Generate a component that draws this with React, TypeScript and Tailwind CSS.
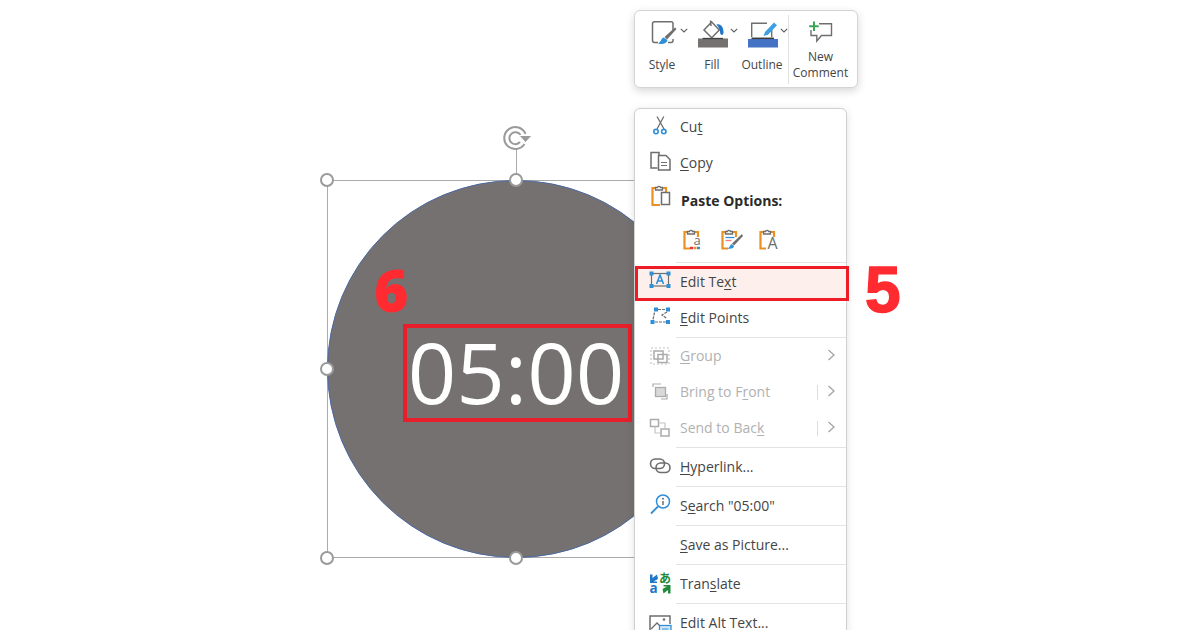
import type { ReactNode } from "react";

const G = "#6e6e6e";
const O = "#ea8f22";
const B = "#2f8fd8";

function Icon({ size = 24, children }: { size?: number; children: ReactNode }) {
  return (
    <svg width={size} height={size} viewBox={`0 0 ${size} ${size}`} fill="none" className="shrink-0 overflow-visible">
      {children}
    </svg>
  );
}

function Clip() {
  return <path d="M5 5H2.500V21.500H8M16 10V5H13" stroke={O} strokeWidth="2.200" />;
}

function ClipTop() {
  return <path d="M5.500 7V4.500h2a1.600 1.600 0 0 1 3 0h2V7Z" stroke={G} strokeWidth="1.300" fill="#fff" />;
}

const menuIcons: Record<string, ReactNode> = {
  cut: (
    <Icon>
      <path d="M9 1.500 16 14M15.800 1.500 9 14" stroke={G} strokeWidth="1.300" />
      <circle cx="8" cy="16.600" r="2.200" stroke={B} strokeWidth="1.600" />
      <circle cx="15.800" cy="16.600" r="2.200" stroke={B} strokeWidth="1.600" />
    </Icon>
  ),
  copy: (
    <Icon>
      <path d="M9.500 17H3V1.500h8V5" stroke={G} strokeWidth="1.500" />
      <path d="M10.500 4.500H18l4 4V19H10.500Z" stroke={G} strokeWidth="1.500" fill="#fff" />
      <path d="M13 11.500h6M13 14.500h6" stroke={G} strokeWidth="1.100" />
    </Icon>
  ),
  paste: (
    <Icon>
      <path d="M7 3H4.500V20H12M18 7V3H15" stroke={O} strokeWidth="2.200" />
      <path d="M7.500 5V2.500h2a1.600 1.600 0 0 1 3 0h2V5Z" stroke={G} strokeWidth="1.300" fill="#fff" />
      <rect x="13.500" y="7.500" width="8" height="12" stroke={G} strokeWidth="1.500" fill="#fff" />
    </Icon>
  ),
  editText: (
    <Icon>
      <rect x="3.500" y="3.500" width="17" height="12.500" stroke={G} strokeWidth="1.200" />
      <path d="M8.500 14 12 5l3.500 9M9.800 11h4.400" stroke={B} strokeWidth="1.600" />
      {[
        [1.500, 1.500],
        [18.500, 1.500],
        [1.500, 14],
        [18.500, 14],
      ].map(([x, y]) => (
        <rect key={x + "-" + y} x={x} y={y} width="4" height="4" fill={B} />
      ))}
    </Icon>
  ),
  editPoints: (
    <Icon>
      <path d="M10 3.500h8M19 6l-5 3 5 3.500M6.500 6.500l-1.500 7M7 16h11" stroke={G} strokeWidth="1.200" strokeDasharray="3 1" />
      {[
        [6, 1.500],
        [18, 1.500],
        [2.500, 14],
        [18, 14],
      ].map(([x, y]) => (
        <rect key={x + "-" + y} x={x} y={y} width="4" height="4" fill={B} />
      ))}
    </Icon>
  ),
  group: (
    <Icon>
      <rect x="3" y="4" width="18" height="16" stroke="#c4c4c4" strokeWidth="1.200" strokeDasharray="2 2" />
      <rect x="6" y="7" width="9" height="8" stroke="#ababab" strokeWidth="1.500" />
      <rect x="10" y="10.500" width="9" height="8" stroke="#ababab" strokeWidth="1.500" />
    </Icon>
  ),
  front: (
    <Icon>
      <path d="M5 7V4h8M19 14v5h-6" stroke="#ababab" strokeWidth="1.200" />
      <rect x="7.500" y="7.500" width="10" height="9" fill="#d9d9d9" stroke="#ababab" strokeWidth="1.300" />
    </Icon>
  ),
  back: (
    <Icon>
      <rect x="2.500" y="3.500" width="8" height="7" stroke="#ababab" strokeWidth="1.500" />
      <rect x="13" y="13" width="8" height="7" stroke="#ababab" strokeWidth="1.500" />
      <path d="M10.500 7h6.500v6M7 10.500V17h6" stroke="#c4c4c4" strokeWidth="1.200" />
    </Icon>
  ),
  link: (
    <Icon>
      <rect x="2.500" y="4" width="14" height="9.500" rx="4.700" stroke={G} strokeWidth="1.600" />
      <rect x="8" y="8" width="14" height="9.500" rx="4.700" stroke={G} strokeWidth="1.600" />
    </Icon>
  ),
  search: (
    <Icon>
      <circle cx="15" cy="7.500" r="6.500" stroke={B} strokeWidth="1.500" />
      <path d="M10 12.500 3 19.500" stroke={B} strokeWidth="1.800" />
      <path d="M15 7v4" stroke={G} strokeWidth="1.500" />
      <circle cx="15" cy="4.700" r="1" fill={G} />
    </Icon>
  ),
  translate: (
    <Icon>
      <path d="M2 2.500h2.500V6L9 2.500 10 7 5.500 9.500H9V11H2Z" fill="#1f77c9" />
      <text x="1.500" y="21" fontSize="13.500" fontWeight="700" fill="#1f77c9" fontFamily="Open Sans">a</text>
      <text x="11" y="11" fontSize="12" fontWeight="700" fill="#218a3a" fontFamily="Noto Sans CJK JP">あ</text>
      <path d="M22.500 21.500H20V18l-4.500 3.500-1-4.500L19 14.500h-3.500V13h7Z" fill="#218a3a" />
    </Icon>
  ),
  alt: (
    <Icon>
      <path d="M10 20H2V5h20v8" stroke={G} strokeWidth="1.500" />
      <path d="M3 18l6-6 3.500 3.500" stroke={G} strokeWidth="1.300" />
      <circle cx="16" cy="8.500" r="1.300" fill={G} />
      <rect x="11.500" y="14.500" width="11.500" height="7" fill="#d7e8f7" stroke={B} strokeWidth="1.300" />
      <path d="M14 18h6.500" stroke={B} strokeWidth="1" />
    </Icon>
  ),
};

function Sep({ className = "" }: { className?: string }) {
  return <div className={`ml-[41px] h-[1px] bg-[#e3e3e3] ${className}`} />;
}

type RowProps = {
  icon?: string;
  before: string;
  hot: string;
  after?: string;
  off?: boolean;
  more?: boolean;
  split?: boolean;
  tall?: boolean;
  children?: ReactNode;
};

function Row({ icon, before, hot, after, off, more, split, tall, children }: RowProps) {
  return (
    <div className={`relative flex items-center pl-[13px] ${tall ? "h-[38px]" : "h-[36px]"}`}>
      {children}
      <div className="relative flex h-[24px] w-[24px] shrink-0 items-center justify-center">
        {icon ? menuIcons[icon] : null}
      </div>
      <div className={`relative ml-[8px] text-[14px] leading-[14px] whitespace-pre ${off ? "text-[#b1b1b1]" : "text-[#454545]"}`}>
        {before}
        <span className="underline underline-offset-2">{hot}</span>
        {after}
      </div>
      {split ? <div className="absolute left-[182px] top-[11px] h-[15px] w-[1px] bg-[#dcdcdc]" /> : null}
      {more ? (
        <svg width="9" height="12" viewBox="0 0 9 12" fill="none" className="absolute left-[192px] top-[11px]">
          <path d="M1.500 1 7 6l-5.500 5" stroke="#a4a4a4" strokeWidth="1.300" />
        </svg>
      ) : null}
    </div>
  );
}

function Chevron() {
  return (
    <svg width="8" height="5" viewBox="0 0 8 5" fill="none" className="mt-[10px] ml-[2px] shrink-0">
      <path d="M.8.8 4 4 7.200.8" stroke="#5f5f5f" strokeWidth="1.100" />
    </svg>
  );
}

function ToolButton({ label, children }: { label: string; children: ReactNode }) {
  return (
    <div className="flex w-[50px] flex-col items-center">
      <div className="flex h-[33px] w-full items-start pl-[11px]">
        {children}
        <Chevron />
      </div>
      <div className="mt-[6px] text-[12px] leading-[16px] text-[#454545]">{label}</div>
    </div>
  );
}

function Handle({ className }: { className: string }) {
  return (
    <div className={`absolute h-[14px] w-[14px] rounded-full border-[2.5px] border-[#9a9a9a] bg-white ${className}`} />
  );
}

export default function App() {
  return (
    <div className="relative h-[630px] w-[1200px] overflow-hidden bg-white font-['Open_Sans',sans-serif]">
      {/* shape on the slide */}
      <div className="absolute left-[327px] top-[180px] h-[378px] w-[378px] border border-[#ababab]">
        <div className="absolute -inset-[1px] flex items-center justify-center rounded-full border border-[#4a68a3] bg-[#767171]">
          <div className="ml-[2px] mt-[7px] flex h-[98px] w-[229px] items-center justify-center border-[4px] border-[#e81f2a]">
            <span className="relative left-[-1px] top-[-1px] text-[85px] font-medium leading-none text-white">05:00</span>
          </div>
        </div>
        <div className="absolute left-[188px] top-[-31px] h-[31px] w-[1px] bg-[#ababab]" />
        <svg width="34" height="30" viewBox="0 0 34 30" fill="none" className="absolute left-[172px] top-[-57px]">
          <path d="M24.500 20A11 11 0 1 1 25.500 10" stroke="#9a9a9a" strokeWidth="2" />
          <path d="M20 18A6 6 0 1 1 20.500 11" stroke="#9a9a9a" strokeWidth="2" />
          <path d="M19 11.500h13l-6.500 7Z" fill="#9a9a9a" stroke="#fff" strokeWidth="1" />
        </svg>
        <Handle className="left-[-8px] top-[-8px]" />
        <Handle className="left-[181px] top-[-8px]" />
        <Handle className="left-[-8px] top-[181px]" />
        <Handle className="left-[-8px] top-[370px]" />
        <Handle className="left-[181px] top-[370px]" />
      </div>

      <div className="absolute left-[374px] top-[249px] text-[59px] font-extrabold leading-[80px] text-[#ff2b30]">6</div>
      <div className="absolute left-[865px] top-[255px] font-['Liberation_Sans',sans-serif] text-[64px] font-bold leading-[70px] text-[#ff2b30] [-webkit-text-stroke:1.5px_#ff2b30]">
        5
      </div>

      {/* mini toolbar */}
      <div className="absolute left-[634px] top-[10px] flex h-[78px] w-[224px] rounded-[6px] border border-[#d4d4d4] bg-white pl-[2px] pt-[7px] shadow-[0_3px_8px_rgba(0,0,0,0.16)]">
        <ToolButton label="Style">
          <svg width="30" height="30" viewBox="0 0 30 30" fill="none" className="shrink-0">
            <path d="M10 24.500H6.500a2 2 0 0 1-2-2V5.700a2 2 0 0 1 2-2h16.500a2 2 0 0 1 2 2V12" stroke={G} strokeWidth="1.500" />
            <path d="M25 21v1.500a2 2 0 0 1-2 2H20" stroke={G} strokeWidth="1.500" />
            <path d="M27 9.500 16.500 19l2.500 2.500L28.500 11Z" fill={G} />
            <path d="M15.500 19.500c-2.500 1-2 4-5.500 6 4.500 1.500 9 0 9.500-3.500Z" fill={B} />
          </svg>
        </ToolButton>
        <ToolButton label="Fill">
          <svg width="30" height="30" viewBox="0 0 30 30" fill="none" className="shrink-0">
            <path d="M12.500 2.500 13 8M13.700 4 6 12l7.700 7.700L21.300 12Z" stroke={G} strokeWidth="1.500" />
            <path d="M18.500 6.500c4-1.500 7.500 3 7 8.500-.3 2.500-3 2.500-3.300 0-.2-2.500-1-5.500-3.700-8.500Z" fill="#1f77c9" />
            <rect x="0" y="20.500" width="30" height="9" fill="#767171" />
            <path d="M4.700 20.500H25" stroke="#3f3f3f" strokeWidth="1.300" />
          </svg>
        </ToolButton>
        <ToolButton label="Outline">
          <svg width="30" height="30" viewBox="0 0 30 30" fill="none" className="shrink-0">
            <path d="M19 5.300H3.700V19M23.700 10.500V19" stroke={G} strokeWidth="1.400" />
            <path d="M26 4.500 17 14l-1.500 4 4.500-1.300 9-9.500Z" fill="#3a9fe3" />
            <rect x="0" y="21" width="30" height="8.500" fill="#4472c4" />
            <path d="M3.500 20.300H26" stroke="#3a3a3a" strokeWidth="1.500" />
          </svg>
        </ToolButton>
        <div className="ml-[1px] mt-[-3px] h-[69px] w-[1px] bg-[#e0e0e0]" />
        <div className="flex w-[63px] flex-col items-center text-[12px] leading-[16px] text-[#454545]">
          <svg width="26" height="26" viewBox="0 0 26 26" fill="none" className="mt-[3px] shrink-0">
            <path d="M11 2.800H23.500V14.500H13.500L8.800 20V14.500H3V9" stroke={G} strokeWidth="1.400" />
            <path d="M6 .5v9.500M1.200 5.200h9.500" stroke="#3aa655" strokeWidth="2" />
          </svg>
          <div className="mt-[2px]">New</div>
          <div>Comment</div>
        </div>
      </div>

      {/* context menu */}
      <div className="absolute left-[634px] top-[108px] w-[213px] rounded-t-[6px] border border-[#d0d0d0] bg-white shadow-[0_2px_8px_rgba(0,0,0,0.12)]">
        <Row icon="cut" before="Cu" hot="t" />
        <Row icon="copy" before="" hot="C" after="opy" />
        <div className="flex h-[40px] items-center pl-[13px]">
          <div className="relative top-[-4px] flex h-[24px] w-[24px] items-center justify-center">{menuIcons.paste}</div>
          <div className="ml-[9px] text-[14px] font-bold leading-[20px] text-[#2b2b2b]">Paste Options:</div>
        </div>
        <div className="flex h-[41px] items-center gap-[14px] pl-[47px] pb-[5px]">
          <Icon>
            <Clip />
            <ClipTop />
            <text x="11.500" y="18" fontSize="13" fill={G} fontFamily="Open Sans">a</text>
            <path d="M8 21h3" stroke="#e53935" strokeWidth="2.500" />
            <path d="M11.500 21h3" stroke="#e8912d" strokeWidth="2.500" />
            <path d="M15 21h3" stroke="#2f8fd8" strokeWidth="2.500" />
          </Icon>
          <Icon>
            <Clip />
            <ClipTop />
            <path d="M5.500 10.500h9" stroke={B} strokeWidth="1.300" />
            <path d="M5.500 13.500h6" stroke="#ef7d7d" strokeWidth="1.300" />
            <path d="M22 7 12 16.500l2 2L23 9Z" fill={G} />
            <path d="M11.500 17c-1.500 1-1.500 3.500-4 4.500 3 .8 6.500 0 6.500-2.500Z" fill={B} />
          </Icon>
          <Icon>
            <Clip />
            <ClipTop />
            <text x="9.500" y="22" fontSize="16" fill={G} fontFamily="Open Sans">A</text>
          </Icon>
        </div>
        <Sep className="mb-[1px]" />
        <Row icon="editText" before="Edit Te" hot="x" after="t">
          <div className="absolute left-0 top-[2px] h-[35px] w-[214px] border-[3px] border-[#ee1c25] bg-[#fdf0ec]" />
        </Row>
        <Row icon="editPoints" before="" hot="E" after="dit Points" />
        <Sep className="mt-[1px]" />
        <Row icon="group" before="" hot="G" after="roup" off more />
        <Row icon="front" before="Bring to F" hot="r" after="ont" off more split />
        <Row icon="back" before="Send to Bac" hot="k" off more split />
        <Sep className="mt-[1px]" />
        <Row icon="link" before="" hot="H" after="yperlink..." tall />
        <Sep />
        <Row icon="search" before="S" hot="e" after='arch "05:00"' tall />
        <Sep />
        <Row before="" hot="S" after="ave as Picture..." tall />
        <Sep />
        <Row icon="translate" before="Tran" hot="s" after="late" tall />
        <Sep />
        <Row icon="alt" before="Edit " hot="A" after="lt Text..." tall />
      </div>
    </div>
  );
}
